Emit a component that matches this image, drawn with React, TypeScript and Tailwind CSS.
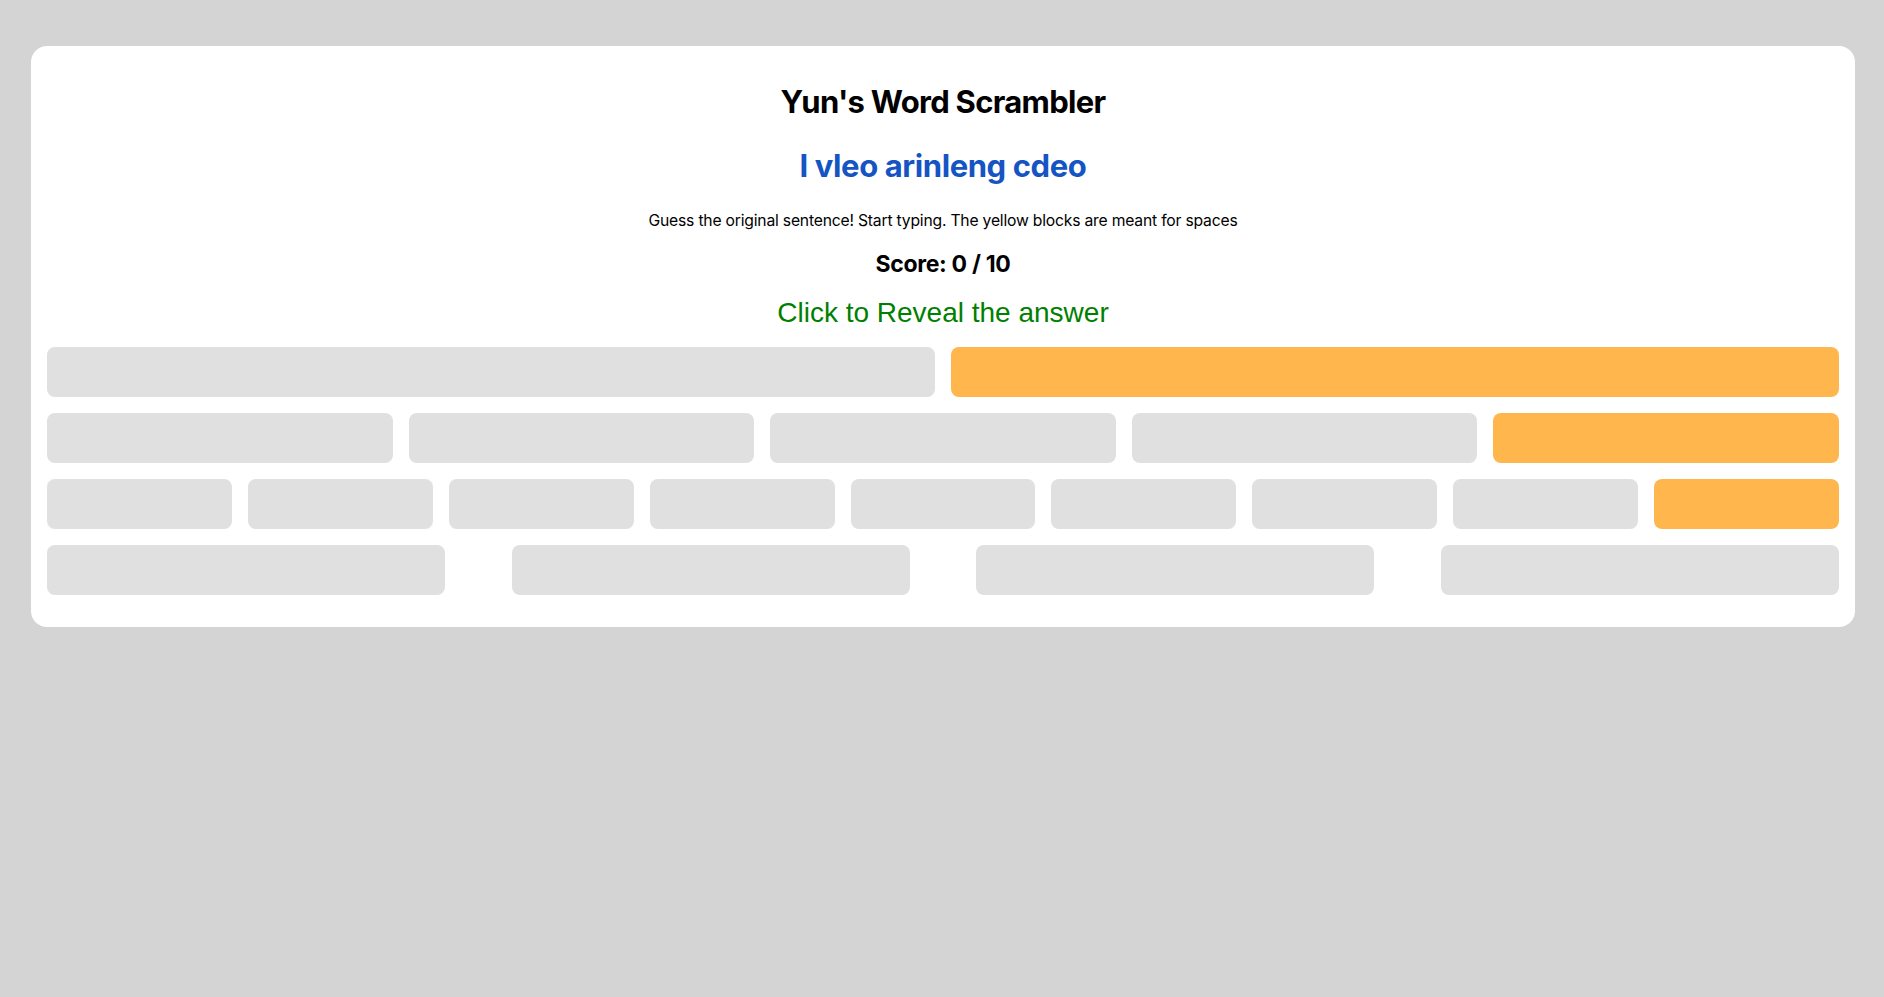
import React from "react";

const rows: { space: boolean }[][] = [
  [{ space: false }, { space: true }],
  [
    { space: false },
    { space: false },
    { space: false },
    { space: false },
    { space: true },
  ],
  [
    { space: false },
    { space: false },
    { space: false },
    { space: false },
    { space: false },
    { space: false },
    { space: false },
    { space: false },
    { space: true },
  ],
];

export default function App() {
  return (
    <div className="min-h-[997px] w-full bg-[#d4d4d4] pl-[31px] pr-[29px] pt-[46px] font-['Inter',sans-serif]">
      <div className="rounded-[16px] bg-white p-4 pb-8">
        <h1 className="mt-[20px] text-center text-[31px] leading-[40px] font-bold tracking-[-0.7px] text-black">
          Yun's Word Scrambler
        </h1>
        <h2 className="mt-[26px] text-center text-[31px] leading-[36px] font-bold tracking-[-0.4px] text-[#1454c3]">
          I vleo arinleng cdeo
        </h2>
        <p className="mt-[27px] text-center text-[15.7px] leading-[20px] tracking-[-0.2px] text-black">
          Guess the original sentence! Start typing. The yellow blocks are meant for spaces
        </p>
        <h3 className="mt-[19px] text-center text-[23px] leading-[28px] font-bold tracking-[-0.3px] text-black">
          Score: 0 / 10
        </h3>
        <div className="mt-[19px] text-center font-['Liberation_Sans',Arial,sans-serif] text-[28px] leading-[32px] text-[#008000] cursor-pointer">
          Click to Reveal the answer
        </div>
        <div className="mt-[18px] flex flex-col gap-4">
          {rows.map((row, i) => (
            <div key={i} className="flex gap-4">
              {row.map((b, j) => (
                <div
                  key={j}
                  className={
                    b.space
                      ? "h-[50px] flex-1 rounded-lg bg-[#ffb74d]"
                      : "h-[50px] flex-1 rounded-lg bg-[#e0e0e0]"
                  }
                />
              ))}
            </div>
          ))}
          <div className="flex justify-between">
            <div className="h-[50px] w-[398px] rounded-lg bg-[#e0e0e0]" />
            <div className="h-[50px] w-[398px] rounded-lg bg-[#e0e0e0]" />
            <div className="h-[50px] w-[398px] rounded-lg bg-[#e0e0e0]" />
            <div className="h-[50px] w-[398px] rounded-lg bg-[#e0e0e0]" />
          </div>
        </div>
      </div>
    </div>
  );
}
